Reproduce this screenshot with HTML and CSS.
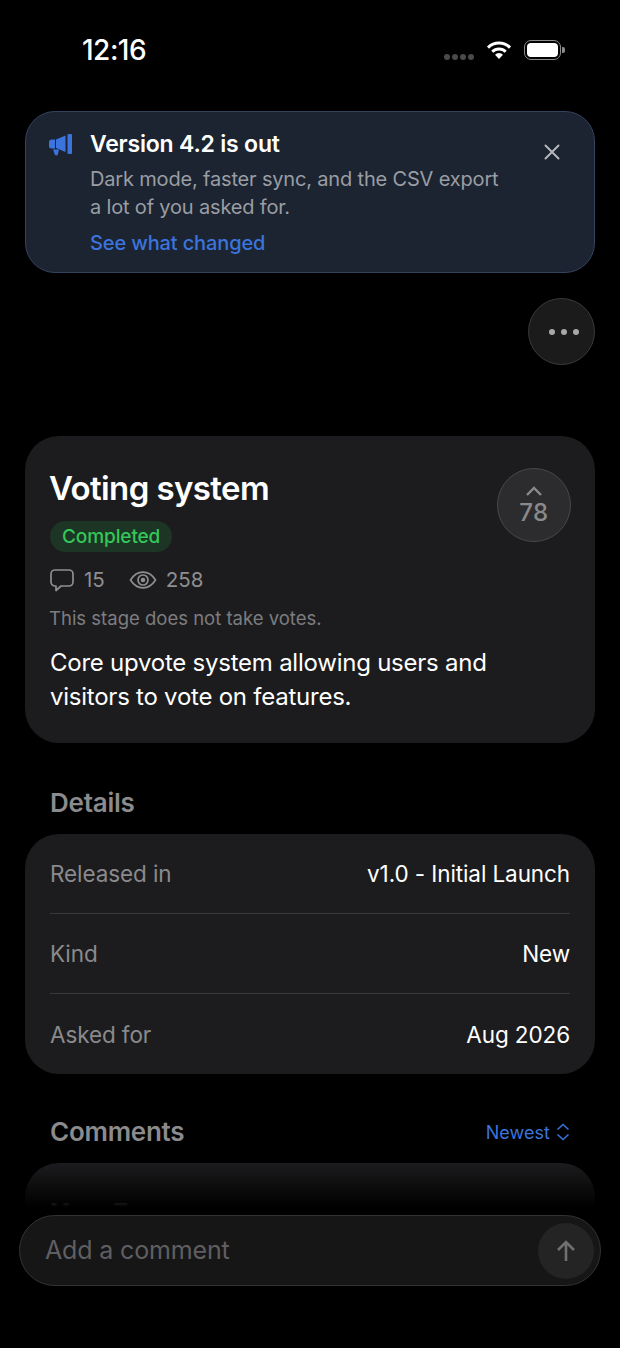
FILE: index.html
```html
<!DOCTYPE html>
<html lang="en">
<head>
    <meta charset="UTF-8">
    <meta name="viewport" content="width=device-width, initial-scale=1.0">
    <title>Voting system</title>
    <link rel="stylesheet" href="styles.css">
</head>
<body>
    <div class="page">
        <div class="status">
            <span class="time">12:16</span>
            <div class="status-icons">
                <div class="signal"><i></i><i></i><i></i><i></i></div>
                <svg class="wifi" width="26" height="20" viewBox="0 0 26 20">
                    <path d="M2 7.600a15.600 15.600 0 0 1 22 0" fill="none" stroke="#fff" stroke-width="3"/>
                    <path d="M6.300 11.800a9.600 9.600 0 0 1 13.400 0" fill="none" stroke="#fff" stroke-width="3"/>
                    <path d="M9 14.800a5.600 5.600 0 0 1 8 0L13 19z" fill="#fff"/>
                </svg>
                <div class="battery"><div class="battery-fill"></div></div>
                <div class="battery-tip"></div>
            </div>
        </div>

        <div class="notice">
            <svg class="notice-icon" width="24" height="22" viewBox="0 0 24 22">
                <path d="M2.500 5.500H6v9H2.500A2.500 2.500 0 0 1 0 12V8a2.500 2.500 0 0 1 2.500-2.500z" fill="#3b74dd"/>
                <path d="M7 5.500 16.500 1.500v16.500L7 14z" fill="#3b74dd"/>
                <rect x="18.500" y="0" width="4.500" height="20" rx="1" fill="#3b74dd"/>
                <path d="M4 15.500h6l-1.200 5a1.600 1.600 0 0 1-2.900.2z" fill="#3b74dd"/>
            </svg>
            <div class="notice-body">
                <div class="notice-title">Version 4.2 is out</div>
                <p class="notice-text">Dark mode, faster sync, and the CSV export a lot of you asked for.</p>
                <a class="notice-link">See what changed</a>
            </div>
            <svg class="notice-close" width="16" height="16" viewBox="0 0 16 16">
                <path d="M1.500 1.500l13 13M14.500 1.500l-13 13" stroke="#b4b7bc" stroke-width="2" stroke-linecap="round"/>
            </svg>
        </div>

        <div class="actions">
            <div class="more"><i></i><i></i><i></i></div>
        </div>

        <div class="card feature">
            <div class="feature-top">
                <div>
                    <h1>Voting system</h1>
                    <span class="badge">Completed</span>
                </div>
                <div class="vote">
                    <svg width="18" height="11" viewBox="0 0 18 11">
                        <path d="M2 9l7-7 7 7" fill="none" stroke="#8a8a8d" stroke-width="2.400"/>
                    </svg>
                    <span class="vote-count">78</span>
                </div>
            </div>
            <div class="stats">
                <svg width="26" height="24" viewBox="0 0 26 24">
                    <path d="M6 2h14a4 4 0 0 1 4 4v8a4 4 0 0 1-4 4h-8l-5 4.500V18H6a4 4 0 0 1-4-4V6a4 4 0 0 1 4-4z" fill="none" stroke="#8e8e91" stroke-width="1.700" stroke-linejoin="round"/>
                </svg>
                <span class="stat-count">15</span>
                <svg class="eye" width="28" height="20" viewBox="0 0 28 20">
                    <path d="M1.500 10C5 4.500 9 2.200 14 2.200S23 4.500 26.500 10C23 15.500 19 17.800 14 17.800S5 15.500 1.500 10z" fill="none" stroke="#8e8e91" stroke-width="1.700"/>
                    <circle cx="14" cy="10" r="5" fill="none" stroke="#8e8e91" stroke-width="1.700"/>
                    <circle cx="14" cy="10" r="2.300" fill="#8e8e91"/>
                </svg>
                <span class="stat-count">258</span>
            </div>
            <p class="feature-note">This stage does not take votes.</p>
            <p class="feature-text">Core upvote system allowing users and visitors to vote on features.</p>
        </div>

        <h2 class="section-title">Details</h2>
        <div class="card details">
            <div class="row"><span class="row-label">Released in</span><span>v1.0 - Initial Launch</span></div>
            <div class="row"><span class="row-label">Kind</span><span>New</span></div>
            <div class="row"><span class="row-label">Asked for</span><span>Aug 2026</span></div>
        </div>

        <div class="comments-head">
            <h2 class="section-title">Comments</h2>
            <div class="sort">
                Newest
                <svg width="14" height="18" viewBox="0 0 14 18">
                    <path d="M1.500 6.500 7 1.500l5.500 5M1.500 11.500 7 16.500l5.500-5" fill="none" stroke="#3b74dd" stroke-width="1.500"/>
                </svg>
            </div>
        </div>
        <div class="card comment">
            <div class="comment-name">Maya Torres</div>
        </div>

        <div class="fade"></div>
        <div class="composer">
            <span class="composer-hint">Add a comment</span>
            <div class="send">
                <svg width="22" height="24" viewBox="0 0 22 24">
                    <path d="M11 22V3M3 11l8-8 8 8" fill="none" stroke="#707072" stroke-width="2.600"/>
                </svg>
            </div>
        </div>
    </div>
</body>
</html>
```

FILE: styles.css
```css
* {
    box-sizing: border-box;
}
html, body {
    margin: 0;
    background-color: #000;
}
body {
    color: #fff;
    font-family: Inter, "Noto Sans", sans-serif;
}
h1, h2, p {
    margin: 0;
}
.page {
    position: relative;
    height: 1348px;
    overflow: hidden;
    padding: 0 25px;
}

.status {
    display: flex;
    justify-content: space-between;
    align-items: center;
    height: 111px;
    padding: 0 30px 11px 57px;
}
.time {
    font-size: 28px;
    font-weight: 500;
    letter-spacing: -0.5px;
}
.status-icons {
    display: flex;
    align-items: center;
}
.signal {
    display: flex;
    gap: 2px;
    margin: 13px 12px 0 0;
}
.signal i {
    width: 6px;
    height: 6px;
    border-radius: 50%;
    background-color: #4a4a4c;
}
.wifi {
    margin-right: 12px;
}
.battery {
    width: 37px;
    height: 20px;
    padding: 2px;
    border: 1.500px solid #8a8a8a;
    border-radius: 7px;
}
.battery-fill {
    height: 100%;
    border-radius: 4px;
    background-color: #fff;
}
.battery-tip {
    width: 3px;
    height: 6px;
    margin-left: 1px;
    border-radius: 0 2px 2px 0;
    background-color: #8a8a8a;
}

.notice {
    display: flex;
    height: 162px;
    padding: 18px 34px 0 23px;
    border: 1px solid #33435f;
    border-radius: 30px;
    background-color: #1c2431;
}
.notice-icon {
    flex: none;
    margin-top: 4px;
}
.notice-body {
    flex: 1;
    margin-left: 17px;
}
.notice-title {
    font-size: 23px;
    font-weight: 600;
    line-height: 28px;
    letter-spacing: -0.2px;
}
.notice-text {
    width: 420px;
    margin-top: 7px;
    color: #9a9da3;
    font-size: 20px;
    line-height: 28px;
    letter-spacing: -0.17px;
}
.notice-link {
    display: block;
    margin-top: 8px;
    color: #3b74dd;
    font-size: 20px;
    font-weight: 500;
    line-height: 28px;
    letter-spacing: -0.13px;
}
.notice-close {
    flex: none;
    margin-top: 14px;
}

.actions {
    display: flex;
    justify-content: flex-end;
    margin-top: 25px;
}
.more {
    display: flex;
    justify-content: center;
    align-items: center;
    gap: 6px;
    width: 67px;
    height: 67px;
    padding-left: 5px;
    border: 1px solid #3a3a3c;
    border-radius: 50%;
    background-color: #1b1b1c;
}
.more i {
    width: 6px;
    height: 6px;
    border-radius: 50%;
    background-color: #a8a8aa;
}

.card {
    border-radius: 34px;
    background-color: #1c1c1e;
}
.feature {
    height: 307px;
    margin-top: 71px;
    padding: 32px 24px 0;
}
.feature-top {
    display: flex;
    justify-content: space-between;
}
h1 {
    font-size: 33px;
    font-weight: 600;
    line-height: 41px;
    letter-spacing: -0.6px;
}
.badge {
    display: inline-block;
    height: 31px;
    margin: 12px 0 0 1px;
    padding: 0 12px;
    border-radius: 16px;
    background-color: #1c3524;
    color: #34c759;
    font-size: 19px;
    font-weight: 500;
    line-height: 31px;
    letter-spacing: -0.1px;
}
.vote {
    display: flex;
    flex-direction: column;
    align-items: center;
    width: 74px;
    height: 74px;
    padding-top: 17px;
    border: 1px solid #48484a;
    border-radius: 50%;
    background-color: #2c2c2e;
    color: #8a8a8d;
    font-size: 24px;
    font-weight: 500;
    line-height: 28px;
    letter-spacing: 0.5px;
}
.vote-count {
    margin-top: 2px;
}
.stats {
    display: flex;
    align-items: center;
    margin-top: 15px;
    color: #8e8e91;
    font-size: 20.500px;
}
.stat-count {
    margin-left: 9px;
}
.eye {
    margin-left: 24px;
}
.feature-note {
    margin-top: 15px;
    color: #7d7d80;
    font-size: 18.500px;
    line-height: 22px;
}
.feature-text {
    margin: 17px 0 0 1px;
    font-size: 24px;
    line-height: 34px;
    letter-spacing: -0.24px;
}

.section-title {
    font-size: 26px;
    font-weight: 600;
    line-height: 32px;
    letter-spacing: -0.25px;
    color: #8b8b8e;
    padding-left: 25px;
}
.card + .section-title {
    margin-top: 44px;
}
.details {
    margin-top: 15px;
    padding: 0 25px;
}
.row {
    display: flex;
    justify-content: space-between;
    align-items: center;
    height: 80px;
    border-bottom: 1px solid #3a3a3c;
    font-size: 22.500px;
    letter-spacing: -0.1px;
}
.row:last-child {
    border-bottom: 0;
}
.row-label {
    color: #8a8a8d;
}

.comments-head {
    display: flex;
    justify-content: space-between;
    align-items: center;
    margin-top: 42px;
}
.sort {
    display: flex;
    align-items: center;
    gap: 6px;
    padding-right: 25px;
    color: #3b74dd;
    font-size: 18px;
    letter-spacing: 0.05px;
}
.comment {
    height: 200px;
    margin-top: 15px;
    padding: 35px 25px 0;
}
.comment-name {
    color: #fff;
    font-size: 22px;
    font-weight: 600;
}

/* over the comments */
.fade {
    position: absolute;
    left: 0;
    right: 0;
    top: 1163px;
    bottom: 0;
    background: linear-gradient(to bottom, rgba(0, 0, 0, 0), #000 44px);
}
.composer {
    position: absolute;
    left: 19px;
    top: 1215px;
    display: flex;
    justify-content: space-between;
    align-items: center;
    width: 582px;
    height: 71px;
    padding: 0 6px 0 25px;
    border: 1px solid #333335;
    border-radius: 36px;
    background-color: #161617;
}
.composer-hint {
    margin-bottom: 2px;
    color: #5f5f62;
    font-size: 25px;
    letter-spacing: -0.15px;
}
.send {
    display: flex;
    justify-content: center;
    align-items: center;
    width: 56px;
    height: 56px;
    border-radius: 50%;
    background-color: #242425;
}
```
